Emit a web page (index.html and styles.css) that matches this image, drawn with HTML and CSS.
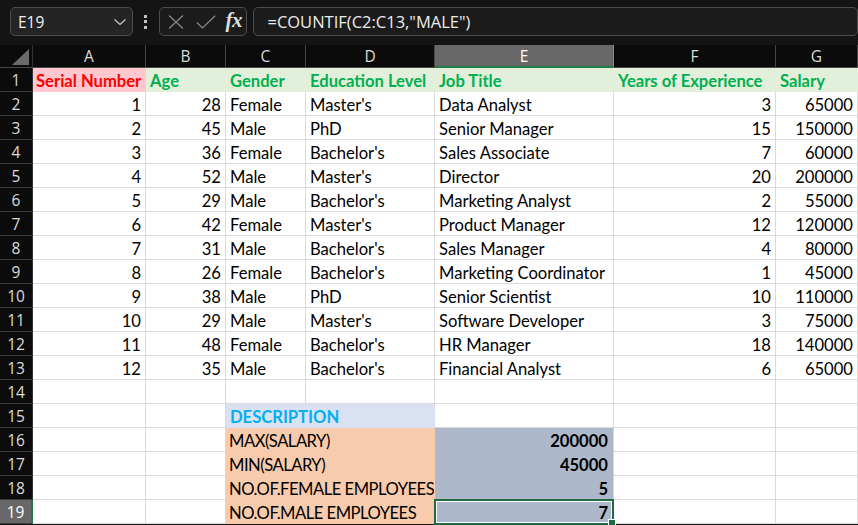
FILE: index.html
```html
<!DOCTYPE html>
<html>
<head>
<meta charset="utf-8">
<link rel="stylesheet" href="styles.css">
</head>
<body>
<div class="topbar">
  <div class="namebox">
    <span>E19</span>
    <svg class="chev" width="12" height="6" viewBox="0 0 12 6"><path d="M0.5 0.5 L6 5.5 L11.5 0.5" fill="none" stroke="#cfcfcf" stroke-width="1.1"/></svg>
  </div>
  <div class="dots"><i></i><i></i><i></i></div>
  <div class="fxbox">
    <svg class="xic" width="16" height="14" viewBox="0 0 16 14"><path d="M1 0.5 L15 13.5 M15 0.5 L1 13.5" fill="none" stroke="#8a8a8a" stroke-width="1.2"/></svg>
    <svg class="chk" width="20" height="14" viewBox="0 0 20 14"><path d="M0.8 7.5 L6.5 13 L19.2 0.8" fill="none" stroke="#8a8a8a" stroke-width="1.2"/></svg>
    <span class="fx">fx</span>
  </div>
  <div class="formula">=COUNTIF(C2:C13,"MALE")</div>
</div>

<div class="sheet">
  <div class="ch corner"><svg width="17" height="16" viewBox="0 0 17 16"><polygon points="17,0 17,16 0,16" fill="#6b6b6b"/></svg></div>
  <div class="ch">A</div><div class="ch">B</div><div class="ch">C</div><div class="ch">D</div><div class="ch chsel">E</div><div class="ch">F</div><div class="ch">G</div>

  <div class="rh">1</div>
  <div class="c hr">Serial Number</div><div class="c hg">Age</div><div class="c hg">Gender</div><div class="c hg">Education Level</div><div class="c hg">Job Title</div><div class="c hg">Years of Experience</div><div class="c hg">Salary</div>

  <div class="rh">2</div>
  <div class="c n">1</div><div class="c n">28</div><div class="c">Female</div><div class="c">Master's</div><div class="c">Data Analyst</div><div class="c n">3</div><div class="c n">65000</div>
  <div class="rh">3</div>
  <div class="c n">2</div><div class="c n">45</div><div class="c">Male</div><div class="c">PhD</div><div class="c">Senior Manager</div><div class="c n">15</div><div class="c n">150000</div>
  <div class="rh">4</div>
  <div class="c n">3</div><div class="c n">36</div><div class="c">Female</div><div class="c">Bachelor's</div><div class="c">Sales Associate</div><div class="c n">7</div><div class="c n">60000</div>
  <div class="rh">5</div>
  <div class="c n">4</div><div class="c n">52</div><div class="c">Male</div><div class="c">Master's</div><div class="c">Director</div><div class="c n">20</div><div class="c n">200000</div>
  <div class="rh">6</div>
  <div class="c n">5</div><div class="c n">29</div><div class="c">Male</div><div class="c">Bachelor's</div><div class="c">Marketing Analyst</div><div class="c n">2</div><div class="c n">55000</div>
  <div class="rh">7</div>
  <div class="c n">6</div><div class="c n">42</div><div class="c">Female</div><div class="c">Master's</div><div class="c">Product Manager</div><div class="c n">12</div><div class="c n">120000</div>
  <div class="rh">8</div>
  <div class="c n">7</div><div class="c n">31</div><div class="c">Male</div><div class="c">Bachelor's</div><div class="c">Sales Manager</div><div class="c n">4</div><div class="c n">80000</div>
  <div class="rh">9</div>
  <div class="c n">8</div><div class="c n">26</div><div class="c">Female</div><div class="c">Bachelor's</div><div class="c">Marketing Coordinator</div><div class="c n">1</div><div class="c n">45000</div>
  <div class="rh">10</div>
  <div class="c n">9</div><div class="c n">38</div><div class="c">Male</div><div class="c">PhD</div><div class="c">Senior Scientist</div><div class="c n">10</div><div class="c n">110000</div>
  <div class="rh">11</div>
  <div class="c n">10</div><div class="c n">29</div><div class="c">Male</div><div class="c">Master's</div><div class="c">Software Developer</div><div class="c n">3</div><div class="c n">75000</div>
  <div class="rh">12</div>
  <div class="c n">11</div><div class="c n">48</div><div class="c">Female</div><div class="c">Bachelor's</div><div class="c">HR Manager</div><div class="c n">18</div><div class="c n">140000</div>
  <div class="rh">13</div>
  <div class="c n">12</div><div class="c n">35</div><div class="c">Male</div><div class="c">Bachelor's</div><div class="c">Financial Analyst</div><div class="c n">6</div><div class="c n">65000</div>

  <div class="rh">14</div>
  <div class="c"></div><div class="c"></div><div class="c"></div><div class="c"></div><div class="c"></div><div class="c"></div><div class="c"></div>
  <div class="rh">15</div>
  <div class="c"></div><div class="c"></div><div class="c desc span2">DESCRIPTION</div><div class="c"></div><div class="c"></div><div class="c"></div>
  <div class="rh">16</div>
  <div class="c"></div><div class="c"></div><div class="c peach span2">MAX(SALARY)</div><div class="c val">200000</div><div class="c"></div><div class="c"></div>
  <div class="rh">17</div>
  <div class="c"></div><div class="c"></div><div class="c peach span2">MIN(SALARY)</div><div class="c val">45000</div><div class="c"></div><div class="c"></div>
  <div class="rh">18</div>
  <div class="c"></div><div class="c"></div><div class="c peach span2">NO.OF.FEMALE EMPLOYEES</div><div class="c val">5</div><div class="c"></div><div class="c"></div>
  <div class="rh rhsel">19</div>
  <div class="c"></div><div class="c"></div><div class="c peach span2">NO.OF.MALE EMPLOYEES</div><div class="c val sel">7</div><div class="c"></div><div class="c"></div>
</div>
</body>
</html>
```

FILE: styles.css
```css
* { box-sizing: border-box; margin: 0; padding: 0; }
html, body { width: 858px; height: 525px; overflow: hidden; background: #141414; }
body { font-family: Lato, "Liberation Sans", sans-serif; }

.topbar {
  height: 45px;
  display: flex;
  align-items: flex-start;
  padding: 7px 0 0 10px;
  background: #141414;
}
.namebox {
  width: 126px;
  height: 29px;
  border: 1px solid #4c4c4c;
  border-radius: 5px;
  background: #242424;
  display: flex;
  align-items: center;
  justify-content: space-between;
  padding: 0 6px 0 7px;
  color: #f0f0f0;
  font-family: "Open Sans", "Noto Sans", sans-serif;
  font-size: 15.5px;
}
.namebox .chev { margin-top: 1px; }
.dots {
  width: 26px;
  height: 29px;
  display: flex;
  flex-direction: column;
  align-items: center;
  justify-content: center;
  gap: 2.5px;
}
.dots i { display: block; width: 3px; height: 3px; background: #c4c4c4; }
.fxbox {
  width: 91px;
  height: 29px;
  border: 1px solid #4c4c4c;
  border-radius: 5px;
  background: #1b1b1b;
  display: flex;
  align-items: center;
  padding-left: 8px;
}
.fxbox .xic { margin-right: 12px; }
.fxbox .chk { margin-right: 10px; }
.fx {
  font-family: "Liberation Serif", "DejaVu Serif", serif;
  font-style: italic;
  font-weight: bold;
  font-size: 21px;
  color: #dedede;
  letter-spacing: -0.5px;
  margin-top: -2px;
}
.formula {
  margin-left: 6px;
  width: 620px;
  height: 29px;
  border: 1px solid #4c4c4c;
  border-radius: 5px;
  background: #1b1b1b;
  color: #ececec;
  font-family: "Open Sans", "Noto Sans", sans-serif;
  font-size: 16.5px;
  line-height: 27px;
  padding-left: 13px;
}

.sheet {
  display: grid;
  grid-template-columns: 33px 113px 80px 80px 129px 179px 162px 82px;
  grid-template-rows: 23px repeat(19, 24px);
  background: #ffffff;
}
.ch {
  background: #0b0b0b;
  color: #dcdcdc;
  font-family: "Open Sans", "Noto Sans", sans-serif;
  font-size: 15.5px;
  text-align: center;
  line-height: 23px;
  border-right: 1px solid #474747;
  border-bottom: 1px solid #474747;
}
.corner {
  display: flex;
  align-items: flex-end;
  justify-content: flex-end;
  padding: 0 3px 2px 0;
  border-right-color: #333;
}
.corner svg { display: block; }
.chsel {
  background: #686868;
  color: #ffffff;
  border-bottom: 2px solid #1f7a45;
  border-right-color: #8a8a8a;
}
.rh {
  background: #0b0b0b;
  color: #dcdcdc;
  font-family: "Open Sans", "Noto Sans", sans-serif;
  font-size: 15.5px;
  text-align: center;
  line-height: 24px;
  border-bottom: 1px solid #3c3c3c;
  border-right: 1px solid #333;
}
.rhsel {
  background: #686868;
  color: #ffffff;
  border-right: 2px solid #1f7a45;
}

.c {
  background: #fff;
  color: #000;
  font-size: 16.6px;
  line-height: 21px;
  padding: 3px 4px 0 4px;
  white-space: nowrap;
  overflow: hidden;
  border-right: 1px solid #dadada;
  border-bottom: 1px solid #dadada;
}
.n { text-align: right; }
.hr {
  background: #ffc7ce;
  color: #ff0000;
  font-weight: bold;
  border-color: transparent;
  padding-left: 3px;
}
.hg {
  background: #e2efda;
  color: #00b050;
  font-weight: bold;
  border-color: transparent;
}
.span2 { grid-column: span 2; }
.desc {
  background: #d9e1f2;
  color: #00b0f0;
  font-weight: bold;
  border-color: transparent;
}
.peach {
  background: #f8cbad;
  border-color: transparent;
  letter-spacing: -0.5px;
  padding-left: 3px;
  padding-right: 0;
}
.val {
  background: #adb9ca;
  font-weight: bold;
  text-align: right;
  border-bottom-color: transparent;
  padding-right: 5px;
}
.sel { position: relative; overflow: visible; }
.sel::after {
  content: "";
  position: absolute;
  left: -1px;
  top: -1px;
  right: -1px;
  bottom: -2px;
  border: 2px solid #1d6b40;
  box-shadow: inset 0 0 0 1px #ffffff;
}
.sel::before {
  content: "";
  position: absolute;
  right: -3px;
  bottom: -4px;
  width: 6px;
  height: 6px;
  background: #1d6b40;
  border: 1px solid #ffffff;
  z-index: 2;
}
```
